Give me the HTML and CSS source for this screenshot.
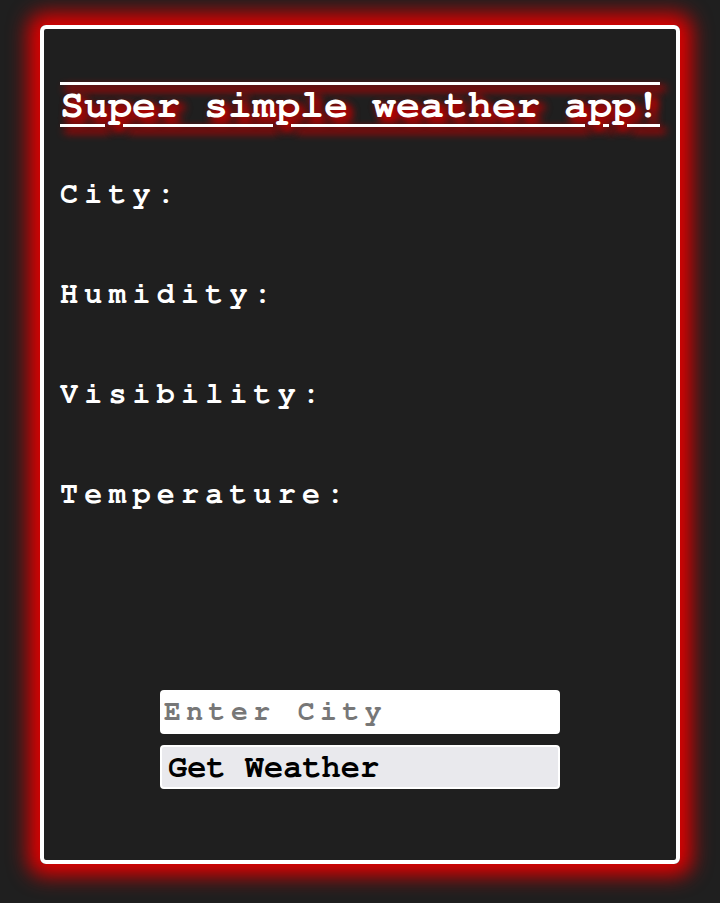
FILE: index.html
```html
<!DOCTYPE html>
<html>
<head>
<meta charset="utf-8">
<link rel="stylesheet" href="styles.css">
</head>
<body>
<main class="card">
  <h1 class="title">Super simple weather app!</h1>
  <p class="label">City:</p>
  <p class="label">Humidity:</p>
  <p class="label">Visibility:</p>
  <p class="label">Temperature:</p>
  <form class="form">
    <input class="city-input" type="text" placeholder="Enter City">
    <button class="btn" type="button">Get Weather</button>
  </form>
</main>
</body>
</html>
```
FILE: styles.css
```css
html, body {
  margin: 0;
  background: #1f1f1f;
}
body {
  padding: 25px 40px 39px;
  font-family: "FreeMono", "Courier New", monospace;
  color: #fff;
}
.card {
  box-sizing: border-box;
  height: 839px;
  border: 4px solid #fff;
  border-radius: 6px;
  box-shadow: 0 0 20px 12px #e00000;
  padding: 0 16px;
  display: flex;
  flex-direction: column;
}
.title {
  margin: 52px 0 0;
  font-size: 40px;
  font-weight: bold;
  letter-spacing: 0;
  line-height: 48px;
  white-space: nowrap;
  text-decoration: underline overline;
  text-decoration-thickness: 3px;
  text-underline-offset: 7px;
  text-shadow: 5px 5px 9px #c00000, 5px 5px 9px #c00000;
}
.label {
  margin: 0;
  height: 100px;
  font-size: 30px;
  font-weight: bold;
  letter-spacing: 6.2px;
  line-height: 36px;
}
.label:first-of-type {
  margin-top: 47px;
}
.form {
  margin-top: auto;
  margin-bottom: 71px;
  align-self: center;
  width: 400px;
  display: flex;
  flex-direction: column;
  gap: 11px;
}
.city-input {
  box-sizing: border-box;
  height: 44px;
  border: none;
  border-radius: 4px;
  background: #fff;
  padding: 0 4px;
  font-family: "FreeMono", monospace;
  font-weight: bold;
  font-size: 28px;
  letter-spacing: 5.5px;
  color: #000;
}
.city-input::placeholder {
  color: #777;
}
.btn {
  box-sizing: border-box;
  height: 44px;
  border: 2px solid #fff;
  border-radius: 4px;
  background: #e9e9ed;
  padding: 0 6px;
  text-align: left;
  font-family: "FreeMono", monospace;
  font-weight: bold;
  font-size: 32px;
  letter-spacing: 0;
  color: #000;
}
```
